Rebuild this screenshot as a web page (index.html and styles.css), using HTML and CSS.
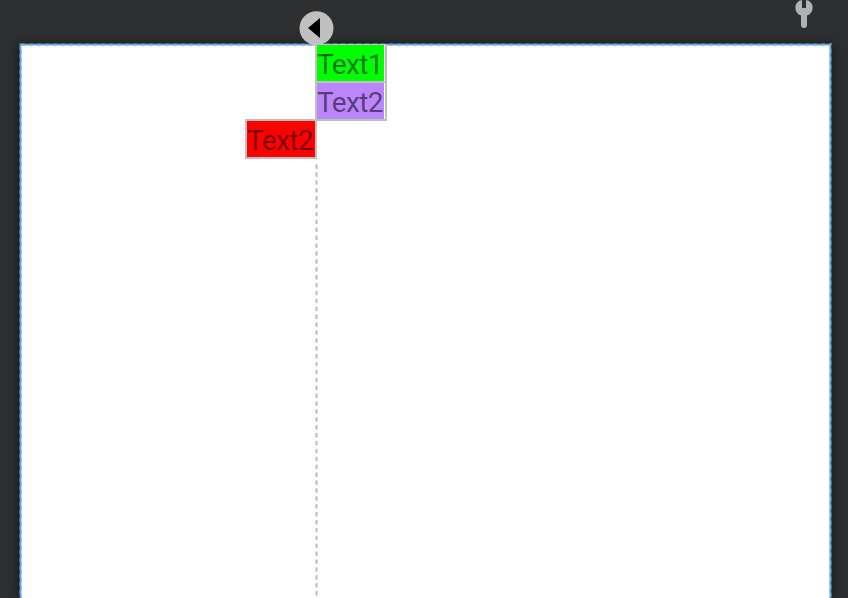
FILE: index.html
```html
<!DOCTYPE html>
<html lang="en">
<head>
<meta charset="utf-8">
<title>Layout editor</title>
<link rel="stylesheet" href="styles.css">
</head>
<body>
<main class="editor">
  <section class="canvas">
    <svg class="frame" width="813" height="555" viewBox="0 0 813 555" fill="none">
      <path d="M1.5 555V1.5H811.5V555" stroke="#67a6df"/>
      <path d="M2.5 555V2.5H810.5V555" stroke="#b0d4f5"/>
      <path d="M2.5 555V2.5H810.5V555" stroke="#94c0e8" stroke-dasharray="4 4"/>
      <path d="M.5 555V.5H812.5V555" stroke="#4c7396"/>
      <path d="M.5 555V.5H812.5V555" stroke="#30485e" stroke-dasharray="4 4"/>
    </svg>
    <svg class="guide" width="3" height="440" viewBox="0 0 3 440">
      <path d="M1.5 5.5V440" stroke="#dedede" stroke-width="3" stroke-dasharray="4.3 3.6"/>
      <path d="M1.5 5.5V440" stroke="#b9b9b9" stroke-dasharray="4.3 3.6"/>
    </svg>
    <div class="view start first"><span class="label green">Text1</span></div>
    <div class="view start"><span class="label purple">Text2</span></div>
    <div class="view end"><span class="label red">Text2</span></div>
  </section>
  <svg class="handle" width="36" height="36" viewBox="0 0 36 36">
    <circle cx="18.5" cy="18.3" r="17" fill="#c0c0c0"/>
    <path d="M10 18L22 8V28Z" fill="#000"/>
  </svg>
  <svg class="wrench" width="18" height="30" viewBox="0 0 18 30">
    <path d="M7 0A8 8 0 0 0 6 15.5V25A3 3 0 0 0 12 25V15.5A8 8 0 0 0 11 0V8H7Z" fill="#afb1b3"/>
  </svg>
</main>
</body>
</html>
```
FILE: styles.css
```css
body {
  margin: 0;
  background: #2d2f31;
  font-family: Roboto, sans-serif;
}
.editor {
  position: relative;
  box-sizing: border-box;
  height: 598px;
  padding: 43px 16px 0 19px;
  overflow: hidden;
}
.canvas {
  position: relative;
  box-sizing: border-box;
  height: 555px;
  padding-top: 1px;
  background: #fff;
  box-shadow: 0 2px 12px rgba(0, 0, 0, .55);
}
.frame {
  position: absolute;
  inset: 0;
}
.guide {
  position: absolute;
  left: 296px;
  top: 116px;
}
.view {
  position: relative;
  box-sizing: border-box;
  height: 40px;
  width: 72px;
  margin-bottom: -2px;
  border: 2px solid #c0c0c0;
  background: #fff;
}
.first {
  height: 39px;
  border-top-width: 1px;
}
.start {
  margin-left: 296px;
}
.end {
  margin-left: 226px;
}
.label {
  display: block;
  width: 67px;
  height: 36px;
  color: rgba(0, 0, 0, .54);
  font-size: 28px;
  line-height: 40px;
  letter-spacing: -.65px;
  white-space: nowrap;
}
.green {
  background: #0f0;
}
.purple {
  background: #bb86fc;
}
.red {
  width: 68px;
  background: #f00;
}
.handle {
  position: absolute;
  left: 298px;
  top: 10px;
}
.wrench {
  position: absolute;
  left: 795px;
  top: 0;
}
```
